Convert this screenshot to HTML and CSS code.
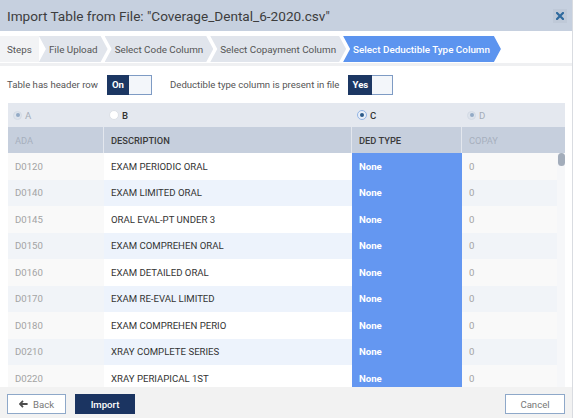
FILE: index.html
```html
<!DOCTYPE html>
<html lang="en">
<head>
<meta charset="utf-8">
<title>Import Table from File</title>
<link rel="stylesheet" href="styles.css">
</head>
<body>
<div class="dialog">
  <header class="titlebar">
    <h1 class="title">Import Table from File: "Coverage_Dental_6-2020.csv"</h1>
    <button class="close" aria-label="Close"><svg viewBox="0 0 8 8" width="8" height="8"><path d="M1 1L7 7M7 1L1 7" stroke="#2f6a9e" stroke-width="2.2" stroke-linecap="square"/></svg></button>
  </header>
  <nav class="steps">
    <span class="steps-label">Steps</span>
    <span class="step">File Upload</span>
    <span class="step">Select Code Column</span>
    <span class="step">Select Copayment Column</span>
    <span class="step active">Select Deductible Type Column</span>
  </nav>
  <div class="options">
    <div class="option">Table has header row
      <span class="toggle"><span class="toggle-on">On</span><span class="toggle-off"></span></span>
    </div>
    <div class="option">Deductible type column is present in file
      <span class="toggle"><span class="toggle-on wide">Yes</span><span class="toggle-off"></span></span>
    </div>
  </div>
  <div class="grid">
    <div class="cols letters">
      <div class="lcell"><span class="radio disabled"></span><span class="letter muted">A</span></div>
      <div class="lcell"><span class="radio empty"></span><span class="letter">B</span></div>
      <div class="lcell"><span class="radio checked"></span><span class="letter">C</span></div>
      <div class="lcell"><span class="radio disabled"></span><span class="letter muted">D</span></div>
      <div></div>
    </div>
    <div class="cols head">
      <div class="hcell muted">ADA</div>
      <div class="hcell">DESCRIPTION</div>
      <div class="hcell">DED TYPE</div>
      <div class="hcell muted last">COPAY</div>
      <div></div>
    </div>
    <div class="body">
      <div class="rows">
        <div class="data"><div class="c code">D0120</div><div class="c desc">EXAM PERIODIC ORAL</div><div class="c ded">None</div><div class="c pay">0</div></div>
        <div class="data"><div class="c code">D0140</div><div class="c desc">EXAM LIMITED ORAL</div><div class="c ded">None</div><div class="c pay">0</div></div>
        <div class="data"><div class="c code">D0145</div><div class="c desc">ORAL EVAL-PT UNDER 3</div><div class="c ded">None</div><div class="c pay">0</div></div>
        <div class="data"><div class="c code">D0150</div><div class="c desc">EXAM COMPREHEN ORAL</div><div class="c ded">None</div><div class="c pay">0</div></div>
        <div class="data"><div class="c code">D0160</div><div class="c desc">EXAM DETAILED ORAL</div><div class="c ded">None</div><div class="c pay">0</div></div>
        <div class="data"><div class="c code">D0170</div><div class="c desc">EXAM RE-EVAL LIMITED</div><div class="c ded">None</div><div class="c pay">0</div></div>
        <div class="data"><div class="c code">D0180</div><div class="c desc">EXAM COMPREHEN PERIO</div><div class="c ded">None</div><div class="c pay">0</div></div>
        <div class="data"><div class="c code">D0210</div><div class="c desc">XRAY COMPLETE SERIES</div><div class="c ded">None</div><div class="c pay">0</div></div>
        <div class="data"><div class="c code">D0220</div><div class="c desc">XRAY PERIAPICAL 1ST</div><div class="c ded">None</div><div class="c pay">0</div></div>
      </div>
      <div class="track"><div class="thumb"></div></div>
    </div>
  </div>
  <footer class="footer">
    <button class="btn"><svg class="arrow" viewBox="0 0 9 8" width="9" height="8"><path d="M4 0.8L0.9 4L4 7.2M1 4H8.6" fill="none" stroke="#4d4d4d" stroke-width="1.8"/></svg>Back</button>
    <button class="btn primary">Import</button>
    <button class="btn cancel">Cancel</button>
  </footer>
</div>
</body>
</html>
```
FILE: styles.css
```css
* { box-sizing: border-box; margin: 0; padding: 0; }
html, body { height: 100%; }
body {
  font-family: Roboto, "Liberation Sans", Arial, sans-serif;
  font-size: 9.6px;
  color: #333;
  background: #fff;
}
.dialog {
  display: flex;
  flex-direction: column;
  width: 573px;
  height: 418px;
  border-right: 1px solid #d9dce1;
  overflow: hidden;
}
.titlebar {
  flex: none;
  height: 31px;
  background: #c6d0df;
  display: flex;
  align-items: center;
  justify-content: space-between;
  padding: 0 5px 0 7px;
}
.title { font-size: 13.6px; font-weight: 400; color: #3d3d3d; }
.close {
  width: 14px; height: 14px;
  border: none;
  background: #bfc9d8;
  display: flex; align-items: center; justify-content: center;
}
.steps {
  flex: none;
  margin-top: 5px;
  height: 30px;
  padding-bottom: 1px;
  border-bottom: 3px solid #eff0f2;
  display: flex;
  align-items: stretch;
  font-size: 9.85px;
}
.steps-label {
  display: flex; align-items: center;
  padding: 0 7px 0 7px;
  background: #f2f3f5;
  color: #555;
}
.step {
  display: flex; align-items: center;
  padding: 0 10px;
  margin-left: -3px;
  background: #e1e5ec;
  color: #555;
  clip-path: polygon(0 0, calc(100% - 7px) 0, 100% 50%, calc(100% - 7px) 100%, 0 100%, 7px 50%);
}
.steps-label + .step { margin-left: 0; }
.step.active { background: #5c94ef; color: #fff; font-weight: 500; padding-right: 11px; }
.options {
  flex: none;
  height: 37px;
  display: flex;
  align-items: center;
  gap: 18px;
  padding: 0 7px;
}
.option { display: flex; align-items: center; gap: 9px; color: #555; }
.toggle { display: flex; height: 20px; width: 45px; }
.toggle-on {
  width: 22px;
  background: #1c3763;
  color: #fff;
  font-weight: 700;
  display: flex; align-items: center; justify-content: center;
}
.toggle-on.wide { width: 24px; }
.toggle-off {
  flex: 1;
  background: #f3f6fa;
  border: 1px solid #7e9bc4;
  border-left: none;
}
.grid {
  flex: 1;
  min-height: 0;
  margin: 0 7px 0 8px;
  display: flex;
  flex-direction: column;
}
.cols { display: grid; grid-template-columns: 96px 248px 110px 95px 9px; flex: none; }
.letters { height: 24px; background: #e4e8ef; }
.lcell { display: flex; align-items: center; gap: 3px; padding-left: 5px; }
.radio {
  width: 9px; height: 9px; border-radius: 50%;
  display: flex; align-items: center; justify-content: center;
}
.radio.disabled { background: #dde3ec; border: 1px solid #d3dae4; }
.radio.disabled::after { content: ""; width: 4px; height: 4px; border-radius: 50%; background: #93aac6; }
.radio.empty { width: 10px; height: 10px; background: #fff; border: 1px solid #dde1e7; }
.radio.checked { width: 10px; height: 10px; background: #e9eff8; border: 1px solid #93b5e6; }
.radio.checked::after { content: ""; width: 4px; height: 4px; border-radius: 50%; background: #2c5a8a; }
.letter { font-weight: 500; color: #333; }
.letter.muted { font-weight: 400; color: #a5adb8; }
.head { height: 26px; background: #c6cfdd; }
.hcell {
  display: flex; align-items: center;
  padding-left: 7px;
  font-size: 9.3px;
  font-weight: 500;
  color: #3a3a3a;
  border-right: 1px solid #e3e7ee;
}
.hcell.last { border-right: none; }
.hcell.muted { color: #a7b0bd; font-weight: 400; }
.body { flex: 1; min-height: 0; display: flex; overflow: hidden; }
.rows { width: 549px; flex: none; }
.data { display: grid; grid-template-columns: 96px 248px 110px 95px; height: 26.5px; background: #fff; }
.data:nth-child(even) { background: #edf3fc; }
.c { display: flex; align-items: center; padding-left: 7px; }
.code, .pay { color: #a3a3a3; background: #f9f9f9; }
.data:nth-child(even) .code, .data:nth-child(even) .pay { background: #f1f4f8; }
.desc { color: #333; }
.ded { background: #6497f1; color: #fff; font-weight: 700; }
.track { width: 9px; flex: none; background: #f6f7f9; }
.thumb { width: 7px; height: 13px; margin-left: 1px; border-radius: 4px; background: #a3adbb; }
.footer {
  flex: none;
  height: 31px;
  background: #f2f2f2;
  display: flex;
  align-items: flex-start;
  gap: 9px;
  padding: 7px 7px 0 7px;
}
.btn {
  height: 20px;
  width: 59px;
  font-family: inherit;
  font-size: 9.6px;
  color: #777;
  background: #fff;
  border: 1px solid #8ea8c9;
  display: flex; align-items: center; justify-content: center;
  gap: 5px;
}
.btn.primary { width: 60px; background: #1b3461; border-color: #1b3461; color: #fff; font-weight: 500; }
.btn.cancel { width: 60px; margin-left: auto; }
.arrow { flex: none; }
```
